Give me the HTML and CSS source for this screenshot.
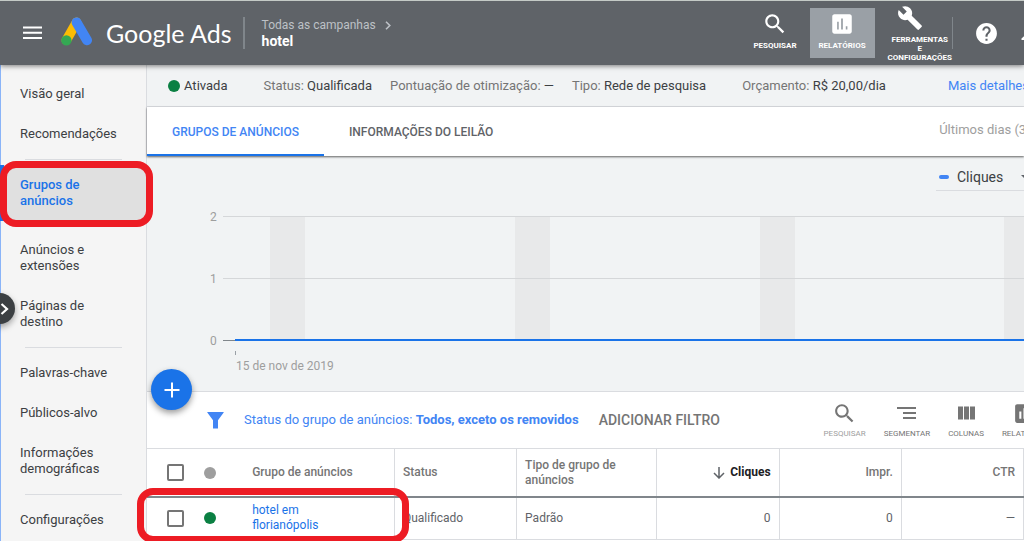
FILE: index.html
```html
<!DOCTYPE html>
<html lang="pt-BR">
<head>
<meta charset="utf-8">
<meta name="viewport" content="width=device-width, initial-scale=1">
<title>Google Ads – Grupos de anúncios</title>
<link rel="stylesheet" href="styles.css">
</head>
<body>
<header class="topbar">
  <button class="menu" type="button" aria-label="Menu">
    <svg width="20" height="14" viewBox="0 0 20 14"><path d="M0 1.5h19M0 6.7h19M0 11.9h19" stroke="#fff" stroke-width="2"/></svg>
  </button>
  <a class="brand" href="#">
    <svg width="32" height="30" viewBox="0 0 32 30" aria-hidden="true">
      <path d="M15.5 5.4 5.4 23.2" stroke="#fbbc04" stroke-width="9.6" stroke-linecap="round"/>
      <path d="M15.6 5.4 26 23.2" stroke="#4285f4" stroke-width="10" stroke-linecap="round"/>
      <circle cx="5.4" cy="23.4" r="5.2" fill="#34a853"/>
    </svg>
    <span class="brand-name">Google Ads</span>
  </a>
  <div class="crumbs">
    <a class="crumb-parent" href="#">Todas as campanhas
      <svg width="6" height="9" viewBox="0 0 6 9"><path d="M1 .8 4.8 4.5 1 8.2" fill="none" stroke="#bdc1c6" stroke-width="1.6"/></svg>
    </a>
    <span class="crumb-current">hotel</span>
  </div>
  <div class="top-actions">
    <button class="top-btn" type="button">
      <svg width="26" height="26" viewBox="0 0 24 24"><path d="M15.5 14h-.79l-.28-.27C15.41 12.59 16 11.11 16 9.5 16 5.91 13.09 3 9.5 3S3 5.91 3 9.5 5.91 16 9.5 16c1.61 0 3.09-.59 4.23-1.57l.27.28v.79l5 4.99L20.49 19l-4.99-5zm-6 0C7.01 14 5 11.99 5 9.5S7.01 5 9.5 5 14 7.01 14 9.5 11.99 14 9.5 14z"/></svg>
      <span>PESQUISAR</span>
    </button>
    <button class="top-btn top-btn-active" type="button">
      <svg width="26" height="26" viewBox="0 0 24 24"><path d="M19 3H5c-1.100 0-2 .9-2 2v14c0 1.100.9 2 2 2h14c1.100 0 2-.9 2-2V5c0-1.100-.9-2-2-2zM9 17H7.500v-7H9v7zm3.800 0h-1.600V7h1.600v10zm4.200 0h-1.500v-3H17v3z"/></svg>
      <span>RELATÓRIOS</span>
    </button>
    <button class="top-btn top-btn-tools" type="button">
      <svg width="26" height="26" viewBox="0 0 24 24"><path d="M22.700 19l-9.100-9.100c.9-2.300.4-5-1.500-6.900-2-2-5-2.400-7.400-1.300L9 6 6 9 1.600 4.700C.4 7.100.9 10.100 2.900 12.100c1.900 1.900 4.600 2.400 6.900 1.500l9.100 9.100c.4.4 1 .4 1.400 0l2.300-2.300c.5-.4.5-1.100.1-1.400z"/></svg>
      <span>FERRAMENTAS<br>E<br>CONFIGURAÇÕES</span>
    </button>
    <span class="top-divider"></span>
    <button class="icon-btn" type="button" aria-label="Ajuda">
      <svg width="25" height="25" viewBox="0 0 24 24"><path d="M12 2C6.480 2 2 6.480 2 12s4.480 10 10 10 10-4.480 10-10S17.520 2 12 2zm1 17h-2v-2h2v2zm2.070-7.750l-.9.920C13.450 12.900 13 13.500 13 15h-2v-.5c0-1.100.45-2.100 1.170-2.830l1.240-1.260c.37-.36.59-.86.59-1.410 0-1.100-.9-2-2-2s-2 .9-2 2H8c0-2.210 1.790-4 4-4s4 1.790 4 4c0 .88-.36 1.680-.93 2.250z"/></svg>
    </button>
    <button class="icon-btn" type="button" aria-label="Notificações">
      <svg width="24" height="24" viewBox="0 0 24 24"><path d="M12 22c1.100 0 2-.9 2-2h-4c0 1.100.9 2 2 2zm8-5.500-2-3V9c0-3.100-1.600-5.600-4.500-6.300V2c0-.8-.7-1.500-1.500-1.500S10.500 1.200 10.500 2v.7C7.600 3.400 6 5.900 6 9v4.500l-4.500 4V19h19z"/></svg>
    </button>
  </div>
</header>

<div class="shell">
  <nav class="sidebar">
    <a class="nav-item" href="#">Visão geral</a>
    <a class="nav-item" href="#">Recomendações</a>
    <hr class="nav-rule">
    <a class="nav-item nav-item-active" href="#" aria-current="page">Grupos de<br>anúncios<span class="marker marker-nav"></span></a>
    <a class="nav-item" href="#">Anúncios e<br>extensões</a>
    <a class="nav-item" href="#">Páginas de<br>destino</a>
    <hr class="nav-rule">
    <a class="nav-item" href="#">Palavras-chave</a>
    <a class="nav-item" href="#">Públicos-alvo</a>
    <a class="nav-item" href="#">Informações<br>demográficas</a>
    <hr class="nav-rule">
    <a class="nav-item" href="#">Configurações</a>
    <button class="expander" type="button" aria-label="Expandir painel">
      <svg width="9" height="14" viewBox="0 0 9 14"><path d="M1.500 2 7 7l-5.500 5" fill="none" stroke="#fff" stroke-width="2.200"/></svg>
    </button>
  </nav>

  <main class="main">
    <div class="statusbar">
      <span class="state"><i class="dot dot-green"></i>Ativada</span>
      <span class="fact">Status: <b>Qualificada</b></span>
      <span class="fact">Pontuação de otimização: <b>—</b></span>
      <span class="fact">Tipo: <b>Rede de pesquisa</b></span>
      <span class="fact fact-budget">Orçamento: <b>R$ 20,00/dia</b></span>
      <a class="details" href="#">Mais detalhes</a>
    </div>

    <div class="tabs">
      <a class="tab tab-active" href="#">GRUPOS DE ANÚNCIOS</a>
      <a class="tab" href="#">INFORMAÇÕES DO LEILÃO</a>
      <span class="range">Últimos dias (30)</span>
    </div>

    <section class="chart">
      <button class="metric" type="button">
        <i class="metric-key"></i>Cliques
        <svg class="caret" width="10" height="5" viewBox="0 0 10 5"><path d="M0 0h10L5 5z" fill="#5f6368"/></svg>
      </button>
      <svg class="plot" width="100%" height="180" role="img" aria-label="Cliques por dia">
        <g fill="#e8e9ea">
          <rect x="123" y="10" width="35" height="123"/>
          <rect x="368" y="10" width="35" height="123"/>
          <rect x="613" y="10" width="35" height="123"/>
          <rect x="857" y="10" width="35" height="123"/>
        </g>
        <g fill="#d5d7d9">
          <rect x="76" y="9" width="100%" height="1"/>
          <rect x="76" y="71" width="100%" height="1"/>
        </g>
        <rect x="76" y="133" width="13" height="1" fill="#80868b"/>
        <rect x="88" y="132" width="100%" height="2" fill="#1a73e8"/>
        <rect x="88" y="144" width="1" height="4" fill="#9aa0a6"/>
        <g class="axis">
          <text x="63" y="14">2</text>
          <text x="63" y="76">1</text>
          <text x="63" y="138">0</text>
          <text x="89" y="163">15 de nov de 2019</text>
        </g>
      </svg>
      <button class="fab" type="button" aria-label="Novo grupo de anúncios">
        <svg width="16" height="16" viewBox="0 0 16 16"><path d="M8 .5v15M.5 8h15" stroke="#fff" stroke-width="2"/></svg>
      </button>
    </section>

    <div class="filterbar">
      <svg class="funnel" width="17" height="17" viewBox="0 0 17 17"><path d="M.5 0h16c.3 0 .4.300.2.600L11 8.200V16.500H6V8.200L.3.600C.1.300.2 0 .5 0z" fill="#4285f4"/></svg>
      <a class="filter" href="#">Status do grupo de anúncios: <b>Todos, exceto os removidos</b></a>
      <button class="add-filter" type="button">ADICIONAR FILTRO</button>
      <div class="tools">
        <button class="tool tool-search" type="button">
          <svg width="25" height="25" viewBox="0 0 24 24"><path d="M15.500 14h-.79l-.28-.27C15.410 12.590 16 11.110 16 9.500 16 5.910 13.090 3 9.500 3S3 5.910 3 9.500 5.910 16 9.500 16c1.610 0 3.090-.59 4.230-1.570l.27.280v.790l5 4.990L20.490 19l-4.990-5zm-6 0C7.010 14 5 11.990 5 9.500S7.010 5 9.500 5 14 7.010 14 9.500 11.990 14 9.500 14z"/></svg>
          <span>PESQUISAR</span>
        </button>
        <button class="tool" type="button">
          <svg width="25" height="25" viewBox="0 0 25 25"><path d="M3 6h19v2H3zM9 11h13v2H9zM9 16h13v2H9z"/></svg>
          <span>SEGMENTAR</span>
        </button>
        <button class="tool" type="button">
          <svg width="25" height="25" viewBox="0 0 25 25"><path d="M4 5.500h5v13H4zM10 5.500h5v13h-5zM16 5.500h5v13h-5z"/></svg>
          <span>COLUNAS</span>
        </button>
        <button class="tool" type="button">
          <svg width="25" height="25" viewBox="0 0 24 24"><path d="M19 3H5c-1.100 0-2 .9-2 2v14c0 1.100.9 2 2 2h14c1.100 0 2-.9 2-2V5c0-1.100-.9-2-2-2zM9 17H7v-7h2v7zm4 0h-2V7h2v10zm4 0h-2v-4h2v4z"/></svg>
          <span>RELATÓRIOS</span>
        </button>
      </div>
    </div>

    <table class="grid">
      <colgroup>
        <col class="c-check"><col class="c-dot"><col class="c-group"><col class="c-num"><col class="c-type"><col class="c-num"><col class="c-num"><col class="c-num">
      </colgroup>
      <thead>
        <tr>
          <th class="pick"><input class="box" type="checkbox" aria-label="Selecionar todos"></th>
          <th><i class="dot dot-grey"></i></th>
          <th class="edge">Grupo de anúncios</th>
          <th class="edge">Status</th>
          <th class="edge">Tipo de grupo de anúncios</th>
          <th class="edge num sorted"><svg width="12" height="13" viewBox="0 0 12 13"><path d="M6 1v11M1 7l5 5 5-5" fill="none" stroke="#5f6368" stroke-width="1.500"/></svg>Cliques</th>
          <th class="edge num">Impr.</th>
          <th class="edge num">CTR</th>
        </tr>
      </thead>
      <tbody>
        <tr>
          <td class="pick"><input class="box" type="checkbox" aria-label="Selecionar hotel em florianópolis"><span class="marker marker-row"></span></td>
          <td><i class="dot dot-green"></i></td>
          <td class="edge"><a class="group-link" href="#">hotel em<br>florianópolis</a></td>
          <td class="edge">Qualificado</td>
          <td class="edge">Padrão</td>
          <td class="edge num">0</td>
          <td class="edge num">0</td>
          <td class="edge num">—</td>
        </tr>
      </tbody>
    </table>
  </main>
</div>
</body>
</html>
```
FILE: styles.css
```css
* { box-sizing: border-box; }

body {
  margin: 0;
  height: 100vh;
  display: flex;
  flex-direction: column;
  overflow: hidden;
  font: 13px/16px Roboto, "Liberation Sans", sans-serif;
  color: #3c4043;
  background: #fff;
}

a { color: inherit; text-decoration: none; }
b { font-weight: 400; }
button { border: 0; padding: 0; background: none; font: inherit; color: inherit; cursor: pointer; }
svg { display: block; flex: none; }

/* Top bar */
.topbar {
  position: relative;
  z-index: 2;
  flex: none;
  display: flex;
  align-items: center;
  height: 65px;
  padding-left: 23px;
  border-top: 1px solid #c4cac6;
  background: #5f6368;
  color: #fff;
  box-shadow: 0 1px 5px rgba(0, 0, 0, .5);
}
.brand { display: flex; align-items: center; gap: 13px; margin-left: 18px; }
.brand svg { margin-bottom: 3px; }
.brand-name { font: 25px/30px Lato, sans-serif; white-space: nowrap; }
.crumbs {
  display: flex;
  flex-direction: column;
  height: 32px;
  margin-left: 11px;
  padding-left: 17px;
  border-left: 2px solid #80868b;
  white-space: nowrap;
}
.crumb-parent { display: flex; align-items: center; gap: 9px; font-size: 12px; color: #bdc1c6; }
.crumb-current { font-size: 14px; font-weight: 700; }
.top-actions {
  display: flex;
  align-items: center;
  height: 100%;
  margin-left: auto;
  margin-right: -20px;
  fill: #fff;
}
.top-btn {
  flex: none;
  display: flex;
  flex-direction: column;
  align-items: center;
  height: 50px;
  padding-top: 3px;
  font-size: 8px;
  line-height: 10px;
  font-weight: 700;
}
.top-btn span { margin-top: 4px; }
.top-btn-active { width: 65px; margin: 0 13px; background: #9aa0a6; }
.top-btn-tools { height: 60px; padding-top: 2px; }
.top-btn-tools svg { margin-right: 20px; }
.top-btn-tools span { line-height: 9px; }
.top-divider { width: 1px; height: 32px; background: #80868b; }
.icon-btn { flex: none; margin-left: 21px; }

/* Sidebar */
.shell { flex: 1; display: flex; min-height: 0; }
.sidebar {
  position: relative;
  z-index: 1;
  flex: none;
  width: 147px;
  padding-top: 9px;
  border-left: 1px solid #8ab4f8;
  border-right: 1px solid #dadce0;
  background: #f5f5f5;
}
.nav-item { display: block; padding: 12px 19px; }
.nav-item-active {
  position: relative;
  margin: 0 0 9px -1px;
  border-left: 4px solid #1a73e8;
  padding-left: 16px;
  background: #e0e0e0;
  color: #1a73e8;
  font-weight: 500;
}
.nav-rule { height: 1px; margin: 5px 24px; border: 0; background: #dadce0; }
.expander {
  position: absolute;
  left: -17px;
  top: 228px;
  width: 31px;
  height: 31px;
  padding-left: 16px;
  border-radius: 50%;
  background: #3c4043;
  box-shadow: 0 3px 6px rgba(0, 0, 0, .35);
}
.marker { position: absolute; z-index: 2; border: 7px solid #ed1c24; border-radius: 16px; pointer-events: none; }
.marker-nav { inset: -4px -7px -6px -4px; }
.marker-row { left: -10px; top: -10px; width: 272px; height: 55px; }

/* Main */
.main { flex: 1; min-width: 0; display: flex; flex-direction: column; }
.statusbar {
  flex: none;
  display: flex;
  align-items: center;
  gap: 18px;
  height: 42px;
  padding-left: 21px;
  border-bottom: 1px solid #dadce0;
  background: #f1f3f4;
  white-space: nowrap;
  overflow: hidden;
}
.state { display: flex; align-items: center; gap: 4px; margin-right: 18px; }
.state, .fact b { color: #3c4043; }
.fact { color: #757575; }
.fact-budget { margin-left: 18px; }
.details { margin-left: 44px; color: #4285f4; }
.dot { display: block; width: 12px; height: 12px; border-radius: 50%; }
.dot-green { background: #0b8043; }
.dot-grey { background: #9e9e9e; }

.tabs {
  position: relative;
  z-index: 1;
  flex: none;
  display: flex;
  height: 49px;
  background: #fff;
  box-shadow: 0 1px 2px rgba(0, 0, 0, .6);
  font-size: 12px;
  line-height: 50px;
  font-weight: 500;
  color: #5f6368;
  white-space: nowrap;
}
.tab { height: 49px; padding: 0 25px; }
.tab-active { color: #4285f4; border-bottom: 2px solid #1a73e8; }
.range { margin-left: auto; margin-right: -14px; font-size: 13px; line-height: 46px; font-weight: 400; color: #9e9e9e; }

/* Chart */
.chart {
  position: relative;
  flex: none;
  display: flex;
  flex-direction: column;
  height: 236px;
  padding-top: 8px;
  border-bottom: 1px solid #dadce0;
  background: #f1f3f4;
}
.metric {
  align-self: flex-end;
  display: flex;
  align-items: center;
  width: 96px;
  height: 27px;
  margin-right: -8px;
  padding-left: 3px;
  border-bottom: 1px solid #dadce0;
  font-size: 14px;
}
.metric-key { width: 10px; height: 4px; margin-right: 8px; border-radius: 2px; background: #4285f4; }
.caret { margin-left: 18px; }
.plot { margin-top: 16px; }
.axis { font-size: 12px; fill: #9e9e9e; }
.fab {
  position: absolute;
  left: 4px;
  bottom: -19px;
  display: grid;
  place-items: center;
  width: 41px;
  height: 41px;
  border-radius: 50%;
  background: #1a73e8;
  box-shadow: 0 3px 6px rgba(0, 0, 0, .4);
}

/* Filter bar */
.filterbar {
  flex: none;
  display: flex;
  align-items: center;
  height: 57px;
  padding-left: 60px;
  border-bottom: 1px solid #dadce0;
  white-space: nowrap;
}
.filter { margin-left: 20px; color: #4285f4; }
.filter b { font-weight: 700; }
.add-filter { margin-left: 20px; font-size: 14px; font-weight: 500; color: #757575; }
.tools { display: flex; gap: 18px; margin-left: auto; margin-right: -24px; fill: #757575; }
.tool { flex: none; display: flex; flex-direction: column; align-items: center; font-size: 8px; line-height: 10px; color: #757575; }
.tool span { margin-top: 3px; }
.tool-search { color: #9e9e9e; }

/* Table */
.grid { width: 100%; table-layout: fixed; border-collapse: collapse; font-size: 12px; line-height: 15px; }
.c-check { width: 49px; }
.c-dot { width: 48px; }
.c-group { width: 150px; }
.c-num { width: 122px; }
.c-type { width: 140px; }
.grid th, .grid td { padding: 0 8px; text-align: left; vertical-align: middle; }
.grid th { height: 48px; border-bottom: 2px solid #80868b; font-weight: 500; color: #757575; }
.grid td { height: 42px; border-bottom: 1px solid #dadce0; color: #5f6368; }
.grid .edge { border-right: 1px solid #dadce0; }
.grid .num { text-align: right; }
.grid .pick { position: relative; padding-left: 20px; }
.grid .sorted { color: #202124; font-weight: 700; }
.sorted svg { display: inline-block; vertical-align: middle; margin-right: 5px; }
.grid .group-link { color: #1a73e8; }
.box { appearance: none; display: block; width: 17px; height: 17px; margin: 0; border: 2px solid #757575; border-radius: 2px; background: #fff; }
```
